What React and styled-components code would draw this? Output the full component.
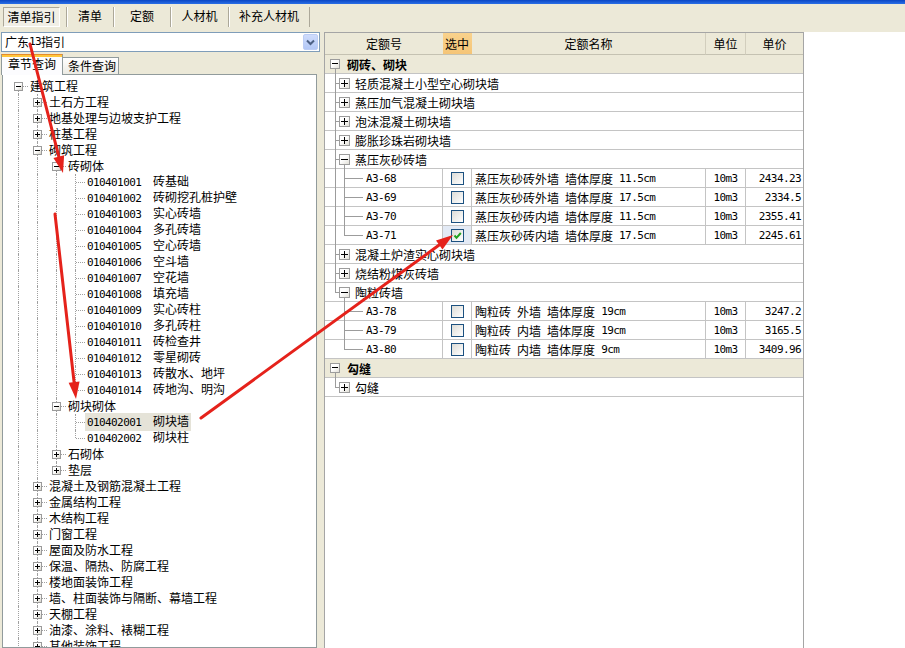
import React from "react";
import styled, { createGlobalStyle } from "styled-components";

const GlobalStyle = createGlobalStyle`
  html, body { margin: 0; padding: 0; }
  body {
    background: #fff;
    font-family: "Noto Sans CJK SC", "Noto Sans", sans-serif;
    font-size: 12px;
    color: #000;
    overflow: hidden;
  }
  * { box-sizing: border-box; }
`;

const ASCII = /([\x20-\x7e]+)/;

function Mixed({ text }) {
  return text.split(ASCII).map((part, i) =>
    i % 2 === 1 ? <Mono key={i}>{part}</Mono> : part
  );
}

const leaves1 = [
  ["010401001", "砖基础"],
  ["010401002", "砖砌挖孔桩护壁"],
  ["010401003", "实心砖墙"],
  ["010401004", "多孔砖墙"],
  ["010401005", "空心砖墙"],
  ["010401006", "空斗墙"],
  ["010401007", "空花墙"],
  ["010401008", "填充墙"],
  ["010401009", "实心砖柱"],
  ["010401010", "多孔砖柱"],
  ["010401011", "砖检查井"],
  ["010401012", "零星砌砖"],
  ["010401013", "砖散水、地坪"],
  ["010401014", "砖地沟、明沟"],
].map(([code, label]) => ({ code, label }));

const tree = [
  {
    label: "建筑工程",
    open: true,
    children: [
      { label: "土石方工程", kids: true },
      { label: "地基处理与边坡支护工程", kids: true },
      { label: "桩基工程", kids: true },
      {
        label: "砌筑工程",
        open: true,
        children: [
          { label: "砖砌体", open: true, children: leaves1 },
          {
            label: "砌块砌体",
            open: true,
            children: [
              { code: "010402001", label: "砌块墙", selected: true },
              { code: "010402002", label: "砌块柱" },
            ],
          },
          { label: "石砌体", kids: true },
          { label: "垫层", kids: true },
        ],
      },
      { label: "混凝土及钢筋混凝土工程", kids: true },
      { label: "金属结构工程", kids: true },
      { label: "木结构工程", kids: true },
      { label: "门窗工程", kids: true },
      { label: "屋面及防水工程", kids: true },
      { label: "保温、隔热、防腐工程", kids: true },
      { label: "楼地面装饰工程", kids: true },
      { label: "墙、柱面装饰与隔断、幕墙工程", kids: true },
      { label: "天棚工程", kids: true },
      { label: "油漆、涂料、裱糊工程", kids: true },
      { label: "其他装饰工程", kids: true },
      { label: "拆除工程", kids: true },
    ],
  },
  { label: "安装工程", kids: true },
];

function flatten(nodes, level = 0, lines = [], out = []) {
  nodes.forEach((node, i) => {
    const last = i === nodes.length - 1;
    out.push({ node, level, lines, last, first: level === 0 && i === 0 });
    if (node.open && node.children) {
      flatten(node.children, level + 1, [...lines, !last], out);
    }
  });
  return out;
}

const treeRows = flatten(tree);

const items = [
  { type: "group", label: "砌砖、砌块" },
  { type: "cat", label: "轻质混凝土小型空心砌块墙" },
  { type: "cat", label: "蒸压加气混凝土砌块墙" },
  { type: "cat", label: "泡沫混凝土砌块墙" },
  { type: "cat", label: "膨胀珍珠岩砌块墙" },
  { type: "cat", label: "蒸压灰砂砖墙", open: true },
  { type: "item", code: "A3-68", name: "蒸压灰砂砖外墙 墙体厚度 11.5cm", unit: "10m3", price: "2434.23", up: true },
  { type: "item", code: "A3-69", name: "蒸压灰砂砖外墙 墙体厚度 17.5cm", unit: "10m3", price: "2334.5", up: true },
  { type: "item", code: "A3-70", name: "蒸压灰砂砖内墙 墙体厚度 11.5cm", unit: "10m3", price: "2355.41", up: true },
  { type: "item", code: "A3-71", name: "蒸压灰砂砖内墙 墙体厚度 17.5cm", unit: "10m3", price: "2245.61", up: true, last: true, checked: true },
  { type: "cat", label: "混凝土炉渣实心砌块墙" },
  { type: "cat", label: "烧结粉煤灰砖墙" },
  { type: "cat", label: "陶粒砖墙", open: true, last: true },
  { type: "item", code: "A3-78", name: "陶粒砖 外墙 墙体厚度 19cm", unit: "10m3", price: "3247.2" },
  { type: "item", code: "A3-79", name: "陶粒砖 内墙 墙体厚度 19cm", unit: "10m3", price: "3165.5" },
  { type: "item", code: "A3-80", name: "陶粒砖 内墙 墙体厚度 9cm", unit: "10m3", price: "3409.96", last: true },
  { type: "group", label: "勾缝" },
  { type: "cat", label: "勾缝", last: true },
];

const arrows = [
  { x1: 30, y1: 44, x2: 63, y2: 173 },
  { x1: 55, y1: 214, x2: 76, y2: 399 },
  { x1: 201, y1: 418, x2: 453, y2: 235 },
];

function Arrow({ x1, y1, x2, y2 }) {
  const a = Math.atan2(y2 - y1, x2 - x1);
  const c = Math.cos(a);
  const s = Math.sin(a);
  const len = 17;
  const half = 5.5;
  const bx = x2 - len * c;
  const by = y2 - len * s;
  const pts = [
    [x2, y2],
    [bx + half * s, by - half * c],
    [bx - half * s, by + half * c],
  ]
    .map((p) => p.join(","))
    .join(" ");
  return (
    <g>
      <line x1={x1} y1={y1} x2={bx + c * 2} y2={by + s * 2} stroke="#e5221b" strokeWidth="3" strokeLinecap="round" />
      <polygon points={pts} fill="#e5221b" />
    </g>
  );
}

export default function App() {
  return (
    <Page>
      <GlobalStyle />
      <TitleStrip />
      <Toolbar>
        <ToolTab $active $w={57}>清单指引</ToolTab>
        <ToolTab $w={47}>清单</ToolTab>
        <ToolTab $w={57}>定额</ToolTab>
        <ToolTab $w={58}>人材机</ToolTab>
        <ToolTab $w={82} $end>补充人材机</ToolTab>
      </Toolbar>

      <Main>
        <LeftPane>
          <Combo>
            <Mixed text="广东13指引" />
            <ComboButton>
              <svg width="9" height="7" viewBox="0 0 9 7">
                <path d="M1 1.5 L4.5 5 L8 1.5" fill="none" stroke="#4d6185" strokeWidth="2" />
              </svg>
            </ComboButton>
          </Combo>
          <TabRow>
            <PaneTab $active>章节查询</PaneTab>
            <PaneTab>条件查询</PaneTab>
          </TabRow>
          <TreeBox>
            {treeRows.map((r, i) => {
              const { node } = r;
              const expandable = node.open || node.kids;
              return (
                <TreeRow key={i}>
                  {r.lines.map((cont, j) => (
                    <Guide key={j} $v={cont} />
                  ))}
                  <Guide $own $last={r.last} $first={r.first}>
                    {expandable && <TBox $open={node.open} />}
                  </Guide>
                  <Label $sel={node.selected}>
                    {node.code && <Code>{node.code}</Code>}
                    {node.label}
                  </Label>
                </TreeRow>
              );
            })}
          </TreeBox>
        </LeftPane>

        <RightPane>
          <Grid>
            <HeadCell>定额号</HeadCell>
            <HeadCell $hot $left>选中</HeadCell>
            <HeadCell $sep>定额名称</HeadCell>
            <HeadCell $sep>单位</HeadCell>
            <HeadCell>单价</HeadCell>

            {items.map((it, i) => {
              if (it.type === "group") {
                return (
                  <SpanRow key={i} $group $indent={22}>
                    <VLine $x={10} $from="mid" />
                    <PBox $x={5} $size={10} $open />
                    {it.label}
                  </SpanRow>
                );
              }
              if (it.type === "cat") {
                return (
                  <SpanRow key={i} $indent={30}>
                    <VLine $x={10} $to={it.last ? "mid" : "bottom"} />
                    <HLine $x={10} $w={4} />
                    <PBox $x={14} $size={11} $open={it.open} />
                    {it.open && <VLine $x={19} $from="mid" />}
                    {it.label}
                  </SpanRow>
                );
              }
              return (
                <React.Fragment key={i}>
                  <CodeCell $sep>
                    {it.up && <VLine $x={10} />}
                    <VLine $x={19} $to={it.last ? "mid" : "bottom"} />
                    <HLine $x={19} $w={19} />
                    <Mono>{it.code}</Mono>
                  </CodeCell>
                  <CheckCell $sep $hl={it.checked}>
                    <CheckBox>
                      {it.checked && (
                        <svg width="11" height="11" viewBox="0 0 11 11">
                          <path d="M2.5 5.5 L4.5 7.8 L8.8 3" fill="none" stroke="#21a121" strokeWidth="2" />
                        </svg>
                      )}
                    </CheckBox>
                  </CheckCell>
                  <NameCell $sep>
                    <Mixed text={it.name} />
                  </NameCell>
                  <UnitCell $sep>
                    <Mono>{it.unit}</Mono>
                  </UnitCell>
                  <PriceCell>
                    <Mono>{it.price}</Mono>
                  </PriceCell>
                </React.Fragment>
              );
            })}
          </Grid>
        </RightPane>
      </Main>

      <ArrowLayer viewBox="0 0 905 648">
        {arrows.map((a, i) => (
          <Arrow key={i} {...a} />
        ))}
      </ArrowLayer>
    </Page>
  );
}

const Page = styled.div`
  position: relative;
  width: 905px;
  height: 648px;
  display: flex;
  flex-direction: column;
  background: #ece9d8;
  overflow: hidden;
`;

const TitleStrip = styled.div`
  flex: none;
  height: 4px;
  background: linear-gradient(to bottom, #0a46c4, #2a6fe6);
`;

const Toolbar = styled.div`
  flex: none;
  height: 28px;
  display: flex;
  align-items: flex-start;
  padding: 3px 0 0 3px;
`;

const ToolTab = styled.div`
  width: ${({ $w }) => $w}px;
  height: 20px;
  line-height: 18px;
  text-align: center;
  white-space: nowrap;
  border-left: 1px solid ${({ $active }) => ($active ? "#aca899" : "#aca899")};
  box-shadow: ${({ $active }) => ($active ? "none" : "inset 1px 0 0 #fff")};
  ${({ $active }) =>
    $active &&
    `
    border: 1px solid;
    border-color: #aca899 #fff #fff #aca899;
    margin-right: 6px;
    background: #f1efe6;
  `}
  ${({ $end }) => $end && `border-right: 1px solid #aca899;`}
`;

const Main = styled.div`
  flex: 1;
  min-height: 0;
  display: flex;
`;

const LeftPane = styled.div`
  flex: none;
  width: 324px;
  display: flex;
  flex-direction: column;
`;

const Combo = styled.div`
  flex: none;
  margin-left: 1px;
  width: 319px;
  height: 20px;
  border: 1px solid #7f9db9;
  background: #fff;
  display: flex;
  align-items: center;
  padding-left: 3px;
  line-height: 16px;
`;

const ComboButton = styled.div`
  margin-left: auto;
  margin-right: 1px;
  width: 15px;
  height: 16px;
  border-radius: 2px;
  background: linear-gradient(to bottom, #cfdcfc, #b3c8f6);
  border: 1px solid #bccdf5;
  display: flex;
  align-items: center;
  justify-content: center;
`;

const TabRow = styled.div`
  flex: none;
  height: 22px;
  display: flex;
  align-items: flex-end;
  padding-left: 1px;
  position: relative;
  z-index: 1;
`;

const PaneTab = styled.div`
  white-space: nowrap;
  border: 1px solid #919b9c;
  border-bottom: none;
  ${({ $active }) =>
    $active
      ? `
    width: 62px;
    height: 21px;
    margin-bottom: -1px;
    padding-left: 6px;
    line-height: 18px;
    background: #fcfcfe;
    border-top-color: #e68b2c;
    box-shadow: inset 0 2px 0 #ffc73c;
  `
      : `
    width: 56px;
    height: 17px;
    border-left: none;
    padding-left: 5px;
    line-height: 16px;
    background: linear-gradient(to bottom, #fff, #ecebe4);
  `}
`;

const TreeBox = styled.div`
  flex: 1;
  min-height: 0;
  margin-left: 2px;
  width: 315px;
  border: 1px solid #919b9c;
  background: #fff;
  overflow: hidden;
  padding: 3px 0 0 6px;
`;

const TreeRow = styled.div`
  display: flex;
  height: 16px;
  align-items: center;
  white-space: nowrap;
`;

const Guide = styled.span`
  position: relative;
  flex: none;
  width: 19px;
  height: 16px;
  &::before {
    content: "";
    display: ${({ $v, $own }) => ($v || $own ? "block" : "none")};
    position: absolute;
    left: 9px;
    top: ${({ $first }) => ($first ? "8px" : "0")};
    bottom: ${({ $own, $last }) => ($own && $last ? "8px" : "0")};
    border-left: 1px dotted #a0a0a0;
  }
  &::after {
    content: "";
    display: ${({ $own }) => ($own ? "block" : "none")};
    position: absolute;
    left: 10px;
    right: 0;
    top: 8px;
    border-top: 1px dotted #a0a0a0;
  }
`;

const TBox = styled.span`
  position: absolute;
  left: 5px;
  top: 4px;
  width: 9px;
  height: 9px;
  z-index: 1;
  border: 1px solid #9a9a9a;
  background: linear-gradient(135deg, #fff 45%, #d8d5ca);
  &::before {
    content: "";
    position: absolute;
    left: 1px;
    right: 1px;
    top: 3px;
    height: 1px;
    background: #000;
  }
  &::after {
    content: "";
    display: ${({ $open }) => ($open ? "none" : "block")};
    position: absolute;
    top: 1px;
    bottom: 1px;
    left: 3px;
    width: 1px;
    background: #000;
  }
`;

const Label = styled.span`
  line-height: 16px;
  padding: 0 2px;
  background: ${({ $sel }) => ($sel ? "#e5e3d8" : "transparent")};
`;

const Mono = styled.span`
  font-family: "DejaVu Sans Mono", "Liberation Mono", monospace;
  font-size: 11px;
  letter-spacing: -0.6px;
  white-space: pre;
`;

const Code = styled(Mono)`
  display: inline-block;
  width: 66px;
`;

const RightPane = styled.div`
  flex: 1;
  background: #fff;
  display: flex;
`;

const Grid = styled.div`
  width: 480px;
  height: 100%;
  border: 1px solid #a5a5a5;
  border-bottom: none;
  display: grid;
  grid-template-columns: 118px 29px 234px 40px 57px;
  grid-auto-rows: 19px;
  grid-template-rows: 22px;
  align-content: start;
`;

const HeadCell = styled.div`
  height: 22px;
  display: flex;
  align-items: center;
  justify-content: ${({ $left }) => ($left ? "flex-start" : "center")};
  padding-left: ${({ $left }) => ($left ? "2px" : "0")};
  white-space: nowrap;
  overflow: hidden;
  background: ${({ $hot }) => ($hot ? "linear-gradient(to bottom, #f9d28c, #f5c577)" : "#ece9d8")};
  border-bottom: 1px solid #c5c2b2;
  border-right: ${({ $sep }) => ($sep ? "1px solid #d2cebd" : "none")};
`;

const SpanRow = styled.div`
  grid-column: 1 / -1;
  position: relative;
  height: 19px;
  display: flex;
  align-items: center;
  padding-left: ${({ $indent }) => $indent}px;
  white-space: nowrap;
  border-bottom: 1px solid #c4c4c4;
  background: ${({ $group }) => ($group ? "#ece9d8" : "#fff")};
  font-weight: ${({ $group }) => ($group ? 700 : 400)};
`;

const VLine = styled.span`
  position: absolute;
  left: ${({ $x }) => $x}px;
  top: ${({ $from }) => ($from === "mid" ? "9px" : "0")};
  bottom: ${({ $to }) => ($to === "mid" ? "9px" : "-1px")};
  border-left: 1px solid #9c9c9c;
  z-index: 1;
`;

const HLine = styled.span`
  position: absolute;
  left: ${({ $x }) => $x}px;
  width: ${({ $w }) => $w}px;
  top: 9px;
  border-top: 1px solid #9c9c9c;
`;

const PBox = styled.span`
  position: absolute;
  left: ${({ $x }) => $x}px;
  top: 4px;
  width: ${({ $size }) => $size}px;
  height: ${({ $size }) => $size}px;
  z-index: 2;
  border: 1px solid #9c9c9c;
  background: linear-gradient(135deg, #fff 40%, #e2e0d8);
  &::before {
    content: "";
    position: absolute;
    left: 1px;
    right: 1px;
    top: ${({ $size }) => Math.floor(($size - 3) / 2)}px;
    height: 1px;
    background: #000;
  }
  &::after {
    content: "";
    display: ${({ $open }) => ($open ? "none" : "block")};
    position: absolute;
    top: 1px;
    bottom: 1px;
    left: ${({ $size }) => Math.floor(($size - 3) / 2)}px;
    width: 1px;
    background: #000;
  }
`;

const Cell = styled.div`
  position: relative;
  height: 19px;
  display: flex;
  align-items: center;
  white-space: nowrap;
  overflow: hidden;
  border-bottom: 1px solid #c4c4c4;
  border-right: ${({ $sep }) => ($sep ? "1px solid #c4c4c4" : "none")};
`;

const CodeCell = styled(Cell)`
  padding-left: 41px;
  overflow: visible;
`;

const CheckCell = styled(Cell)`
  justify-content: center;
  background: ${({ $hl }) => ($hl ? "#e3eaf5" : "#fff")};
`;

const CheckBox = styled.span`
  width: 13px;
  height: 13px;
  border: 1px solid #1c5180;
  background: linear-gradient(135deg, #dcdcd7, #fff);
  display: flex;
  align-items: center;
  justify-content: center;
`;

const NameCell = styled(Cell)`
  padding-left: 3px;
`;

const UnitCell = styled(Cell)`
  justify-content: center;
`;

const PriceCell = styled(Cell)`
  justify-content: flex-end;
  padding-right: 2px;
`;

const ArrowLayer = styled.svg`
  position: absolute;
  left: 0;
  top: 0;
  width: 905px;
  height: 648px;
  pointer-events: none;
  z-index: 10;
`;
